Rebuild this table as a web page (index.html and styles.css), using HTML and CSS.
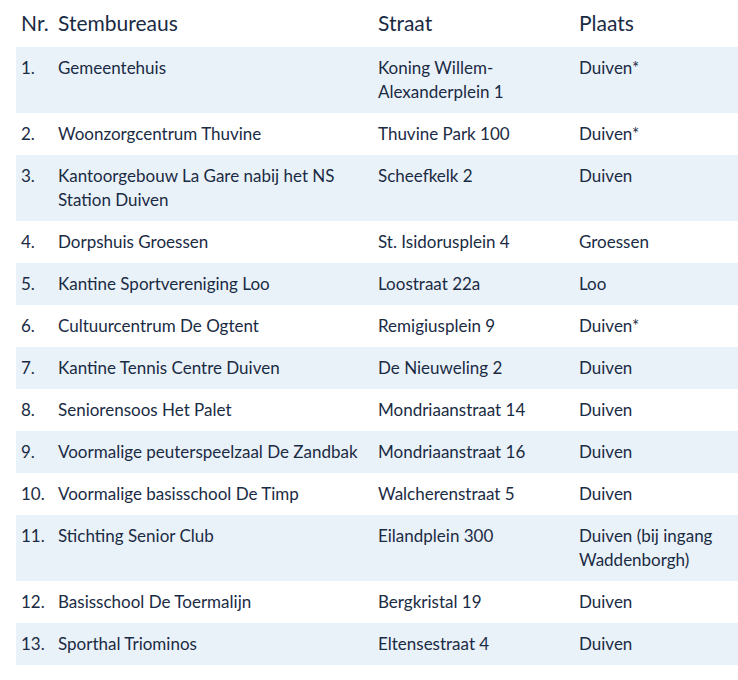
FILE: index.html
```
<!DOCTYPE html>
<html lang="nl">
<head>
<meta charset="utf-8">
<link rel="stylesheet" href="styles.css">
</head>
<body>
<div class="wrap">
<table class="tbl">
<colgroup><col class="c1"><col class="c2"><col class="c3"><col class="c4"></colgroup>
<thead>
<tr><th>Nr.</th><th>Stembureaus</th><th>Straat</th><th>Plaats</th></tr>
</thead>
<tbody>
<tr><td>1.</td><td>Gemeentehuis</td><td>Koning Willem-Alexanderplein 1</td><td>Duiven*</td></tr>
<tr><td>2.</td><td>Woonzorgcentrum Thuvine</td><td>Thuvine Park 100</td><td>Duiven*</td></tr>
<tr><td>3.</td><td>Kantoorgebouw La Gare nabij het NS Station Duiven</td><td>Scheefkelk 2</td><td>Duiven</td></tr>
<tr><td>4.</td><td>Dorpshuis Groessen</td><td>St. Isidorusplein 4</td><td>Groessen</td></tr>
<tr><td>5.</td><td>Kantine Sportvereniging Loo</td><td>Loostraat 22a</td><td>Loo</td></tr>
<tr><td>6.</td><td>Cultuurcentrum De Ogtent</td><td>Remigiusplein 9</td><td>Duiven*</td></tr>
<tr><td>7.</td><td>Kantine Tennis Centre Duiven</td><td>De Nieuweling 2</td><td>Duiven</td></tr>
<tr><td>8.</td><td>Seniorensoos Het Palet</td><td>Mondriaanstraat 14</td><td>Duiven</td></tr>
<tr><td>9.</td><td>Voormalige peuterspeelzaal De Zandbak</td><td>Mondriaanstraat 16</td><td>Duiven</td></tr>
<tr><td>10.</td><td>Voormalige basisschool De Timp</td><td>Walcherenstraat 5</td><td>Duiven</td></tr>
<tr><td>11.</td><td>Stichting Senior Club</td><td>Eilandplein 300</td><td>Duiven (bij ingang Waddenborgh)</td></tr>
<tr><td>12.</td><td>Basisschool De Toermalijn</td><td>Bergkristal 19</td><td>Duiven</td></tr>
<tr><td>13.</td><td>Sporthal Triominos</td><td>Eltensestraat 4</td><td>Duiven</td></tr>
</tbody>
</table>
</div>
</body>
</html>
```
FILE: styles.css
```
html, body {
  margin: 0;
  padding: 0;
  background: #ffffff;
}
.wrap {
  padding-left: 16px;
}
.tbl {
  width: 722px;
  border-collapse: collapse;
  table-layout: fixed;
  font-family: Lato, "Noto Sans", sans-serif;
  color: #1a2b44;
}
.c1 { width: 37px; }
.c2 { width: 320px; }
.c3 { width: 201px; }
.c4 { width: 164px; }
.tbl th {
  text-align: left;
  font-weight: 400;
  font-size: 21px;
  line-height: 28px;
  padding: 9px 5px 10px;
  vertical-align: top;
}
.tbl td {
  font-size: 17px;
  line-height: 24px;
  padding: 9px 5px;
  vertical-align: top;
}
.tbl tbody tr:nth-child(odd) {
  background: #eaf2f9;
}
```
